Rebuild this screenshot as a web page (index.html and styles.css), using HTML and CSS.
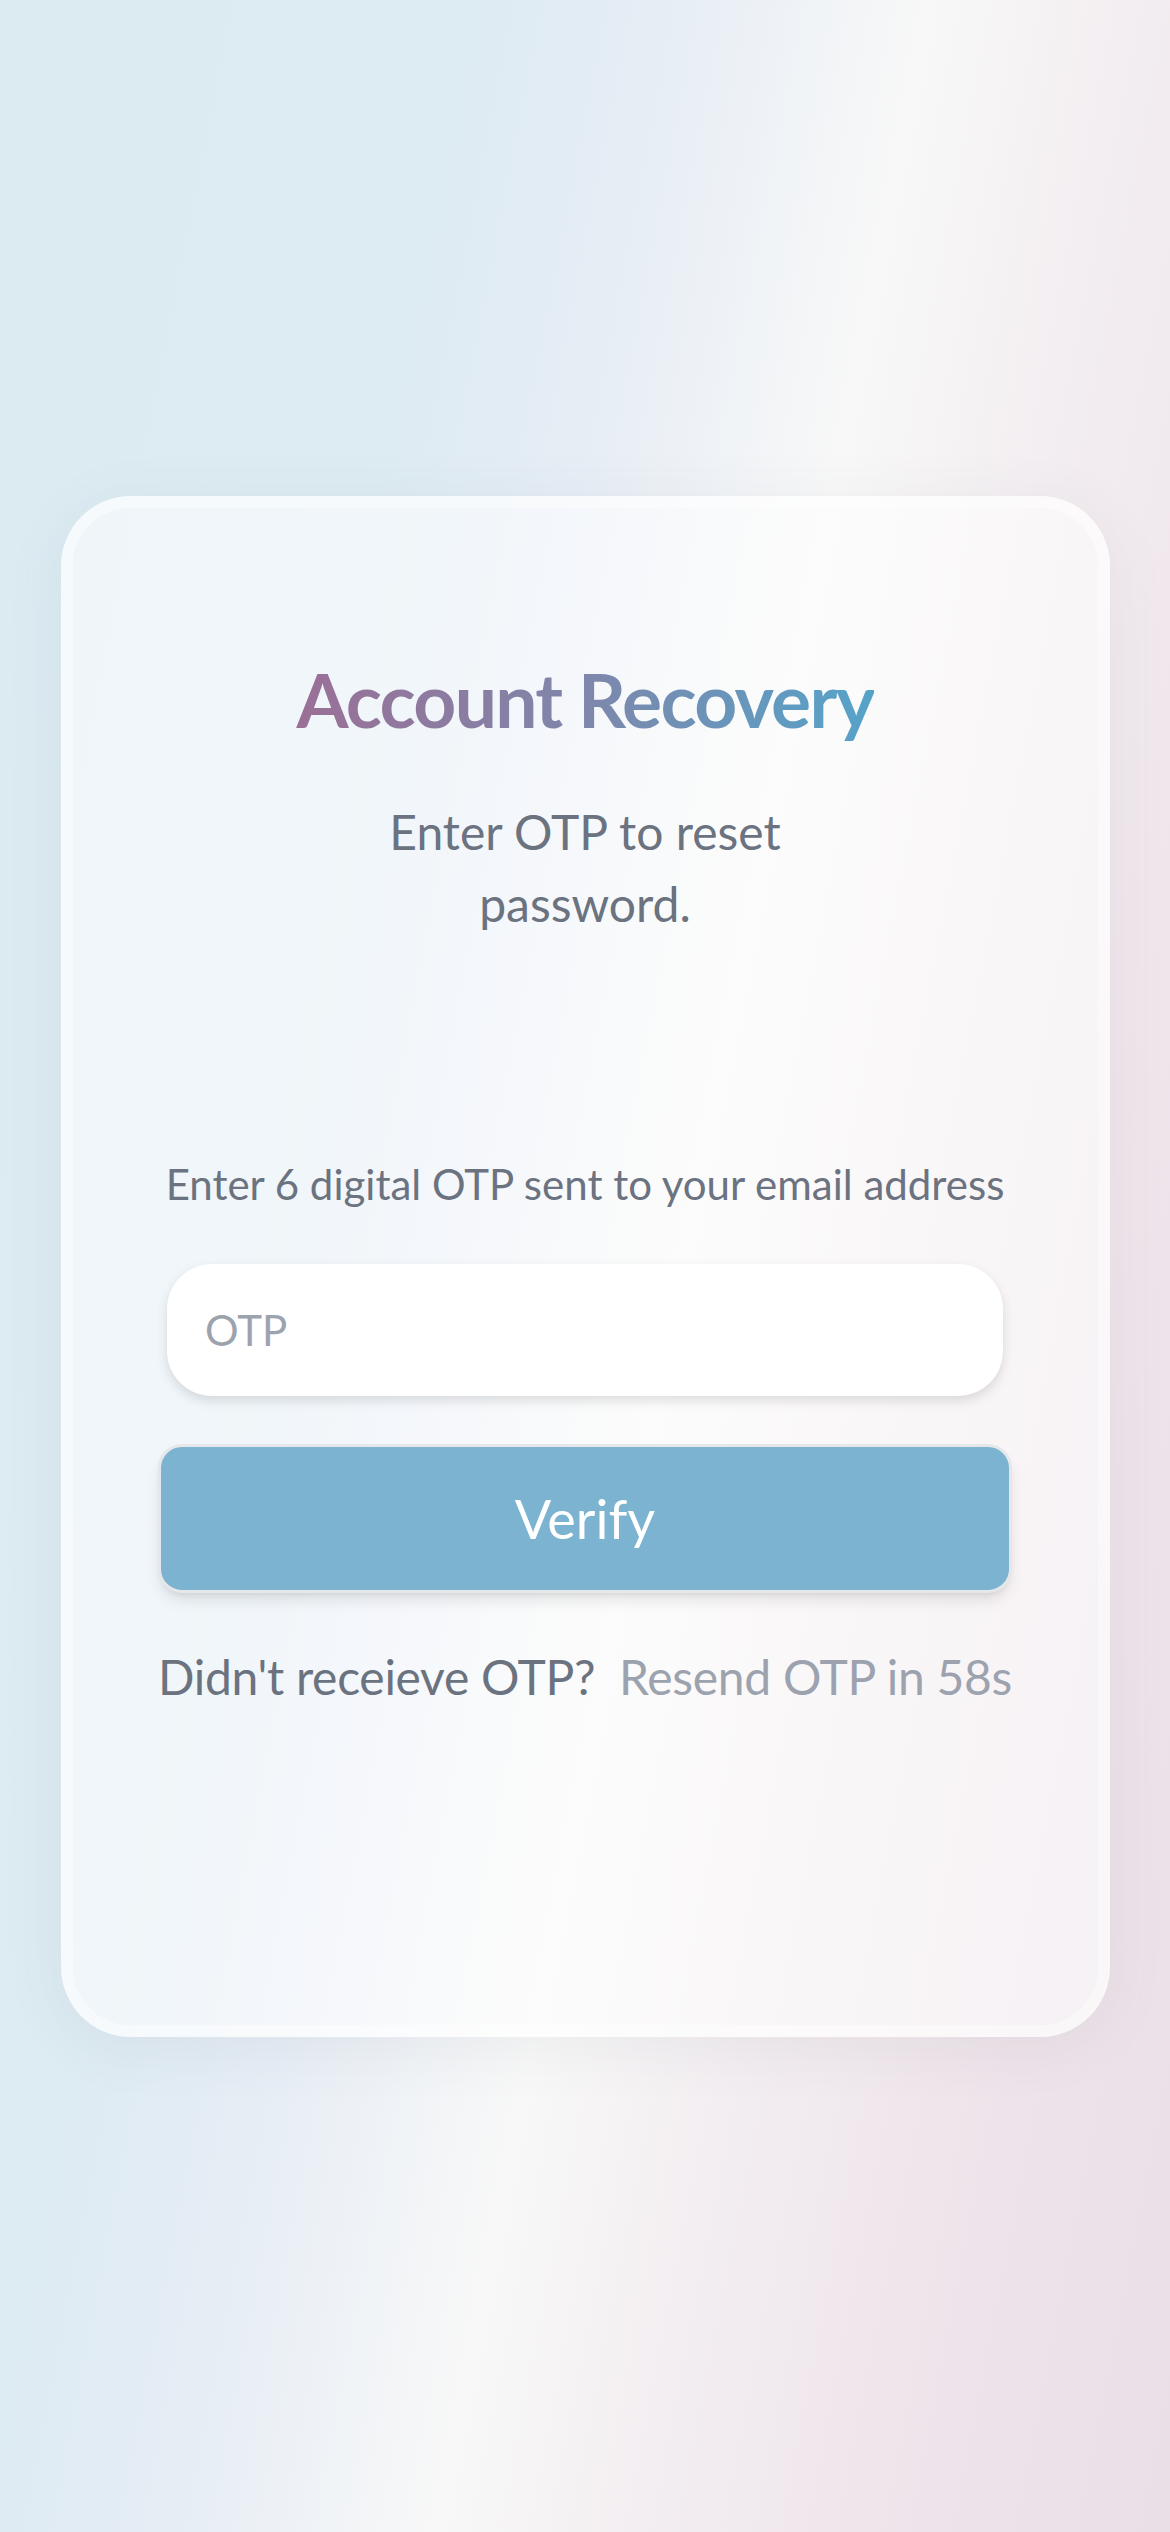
FILE: index.html
```html
<!DOCTYPE html>
<html lang="en">
<head>
<meta charset="utf-8">
<title>Account Recovery</title>
<link rel="stylesheet" href="styles.css">
</head>
<body>
<main class="page">
  <section class="card">
    <h1 class="title"><span class="title-text">Account Recovery</span></h1>
    <p class="subtitle">Enter OTP to reset password.</p>
    <form class="form">
      <label class="label" for="otp">Enter 6 digital OTP sent to your email address</label>
      <input class="otp-input" id="otp" type="text" placeholder="OTP">
      <button class="verify" type="button">Verify</button>
      <div class="resend-row">
        <span class="question">Didn't receieve OTP?</span>
        <span class="resend">Resend OTP in 58s</span>
      </div>
    </form>
  </section>
</main>
</body>
</html>
```

FILE: styles.css
```css
* {
  box-sizing: border-box;
}

html,
body {
  margin: 0;
  padding: 0;
}

body {
  font-family: Lato, "Open Sans", "Liberation Sans", sans-serif;
  min-height: 100vh;
  background: linear-gradient(101deg, #dcebf2 0%, #ddebf2 28%, #e6edf5 40%, #f8f8f8 56%, #f3eef1 68%, #eee3ea 85%, #ebdfe7 100%);
}

.page {
  min-height: 100vh;
  display: flex;
  align-items: center;
  justify-content: center;
}

.card {
  width: 1049px;
  height: 1541px;
  border: 12px solid rgba(255, 255, 255, 0.72);
  border-radius: 70px;
  background: rgba(255, 255, 255, 0.55);
  background-clip: padding-box;
  box-shadow: 0 10px 60px rgba(90, 100, 120, 0.08);
  padding-top: 148px;
  display: flex;
  flex-direction: column;
  align-items: center;
}

.title {
  margin: 0;
  font-size: 75px;
  line-height: 86px;
  font-weight: 700;
  letter-spacing: -1.7px;
  text-align: center;
}

.title-text {
  display: inline-block;
  background: linear-gradient(90deg, #9b6f96 0%, #7e87ab 50%, #55a3ca 100%);
  -webkit-background-clip: text;
  background-clip: text;
  color: transparent;
}

.subtitle {
  margin: 54px 0 0;
  max-width: 440px;
  font-size: 48px;
  line-height: 72px;
  color: #6b7280;
  text-align: center;
}

.form {
  width: 854px;
  margin-top: 213px;
  display: flex;
  flex-direction: column;
  align-items: center;
}

.label {
  font-size: 42px;
  line-height: 63px;
  color: #6b7280;
  text-align: center;
}

.otp-input {
  margin-top: 48px;
  width: 836px;
  height: 132px;
  border: none;
  border-radius: 45px;
  background: #ffffff;
  box-shadow: 0 5px 12px rgba(0, 0, 0, 0.12);
  padding: 0 38px;
  font-family: inherit;
  font-size: 42px;
  color: #374151;
  outline: none;
}

.otp-input::placeholder {
  color: #9ca3af;
}

.verify {
  margin-top: 48px;
  width: 854px;
  height: 149px;
  border: 3px solid #e5e7eb;
  border-radius: 24px;
  background: #7bb3d0;
  color: #ffffff;
  font-family: inherit;
  font-size: 54px;
  box-shadow: 0 10px 15px -3px rgba(0, 0, 0, 0.1), 0 4px 6px -4px rgba(0, 0, 0, 0.1);
  cursor: pointer;
}

.resend-row {
  margin-top: 48px;
  width: 854px;
  display: flex;
  justify-content: space-between;
  font-size: 48px;
  line-height: 72px;
  letter-spacing: -0.3px;
}

.question {
  color: #6b7280;
}

.resend {
  color: #9ca3af;
}
```
